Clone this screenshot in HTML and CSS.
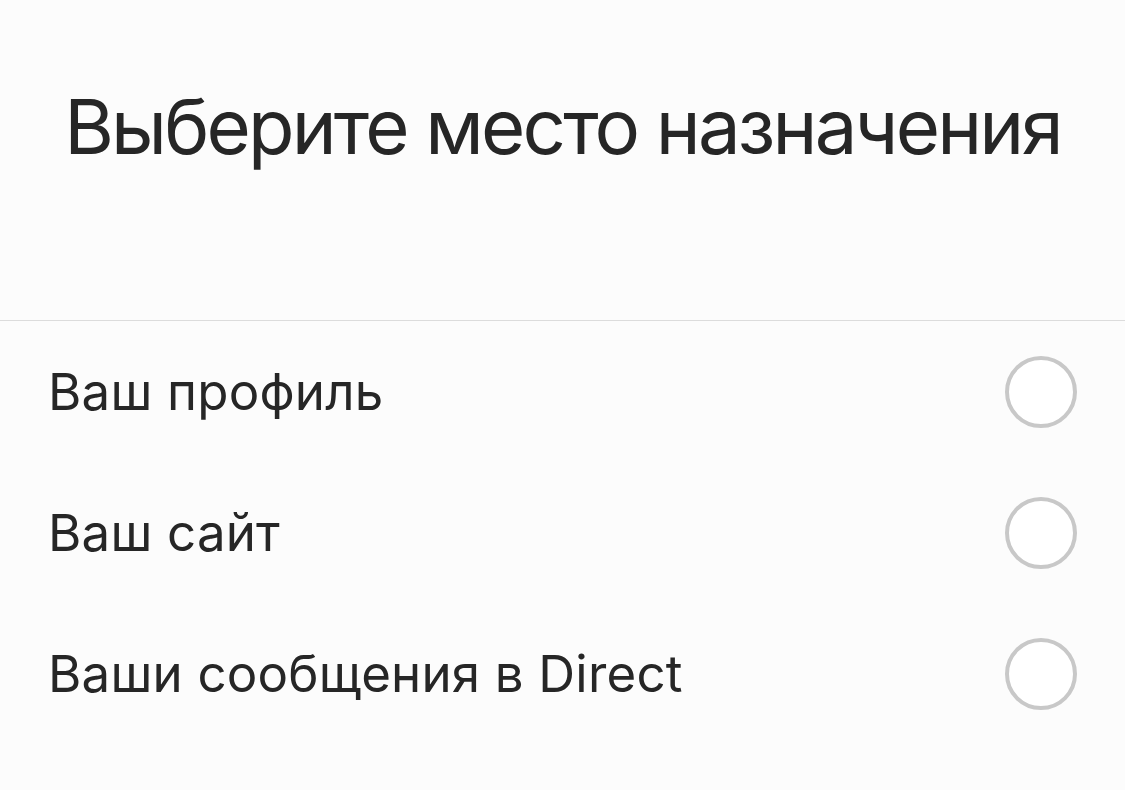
FILE: index.html
```html
<!DOCTYPE html>
<html lang="ru">
<head>
    <meta charset="UTF-8">
    <meta name="viewport" content="width=device-width, initial-scale=1.0">
    <title>Выберите место назначения</title>
    <link rel="stylesheet" href="styles.css">
</head>
<body>
    <div class="screen">
        <div class="header">
            <h1 class="title">Выберите место назначения</h1>
        </div>
        <div class="options">
            <label class="option">
                <span class="option-text">Ваш профиль</span>
                <span class="radio"></span>
            </label>
            <label class="option">
                <span class="option-text">Ваш сайт</span>
                <span class="radio"></span>
            </label>
            <label class="option">
                <span class="option-text">Ваши сообщения в Direct</span>
                <span class="radio"></span>
            </label>
        </div>
    </div>
</body>
</html>
```

FILE: styles.css
```css
body, html {
    margin: 0;
    padding: 0;
    font-family: Inter, "Noto Sans", sans-serif;
    background-color: #fcfcfc;
    color: #262626;
    height: 100%;
    overflow: hidden;
}
.screen {
    display: flex;
    flex-direction: column;
}
.header {
    height: 320px;
    display: flex;
    justify-content: center;
    align-items: center;
    border-bottom: 1px solid #dcdcdc;
}
.title {
    margin: 0 0 68px 0;
    font-size: 76px;
    font-weight: 400;
    letter-spacing: -2.8px;
}
.options {
    display: flex;
    flex-direction: column;
}
.option {
    height: 141px;
    display: flex;
    align-items: center;
    justify-content: space-between;
    padding: 0 48px 0 48px;
}
.option-text {
    font-size: 51px;
    font-weight: 400;
    letter-spacing: 0.2px;
}
.radio {
    width: 64px;
    height: 64px;
    border: 4px solid #c8c8c8;
    border-radius: 50%;
    background-color: #fff;
}
```
